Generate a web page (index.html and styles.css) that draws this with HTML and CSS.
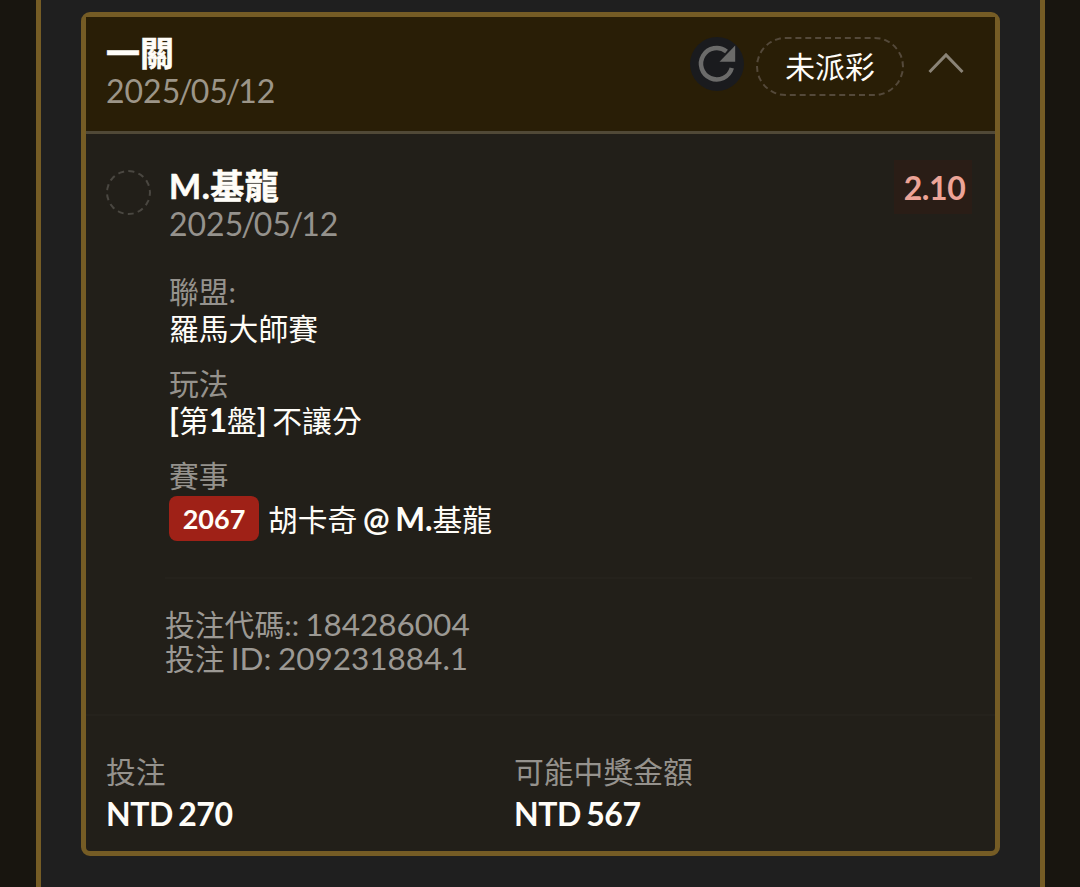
FILE: index.html
```html
<!DOCTYPE html>
<html lang="zh-Hant">

<head>
    <meta charset="UTF-8">
    <meta name="viewport" content="width=device-width, initial-scale=1.0">
    <title>投注紀錄</title>
    <link rel="stylesheet" href="styles.css">
</head>

<body>
    <div class="container">
        <div class="card">
            <div class="card-header">
                <div class="header-text">
                    <div class="title">一關</div>
                    <div class="date">2025<span class="slash">/</span>05<span class="slash">/</span>12</div>
                </div>
                <div class="header-actions">
                    <button class="btn-refresh">
                        <svg width="54" height="54" viewBox="0 0 54 54">
                            <path d="M41.8 31A15.7 15.7 0 1 1 36.5 14.5" fill="none" stroke="#6b6b6a" stroke-width="4.5" />
                            <path d="M45.2 8.5V24.7H29.5Z" fill="#6b6b6a" />
                        </svg>
                    </button>
                    <div class="status">未派彩</div>
                    <svg class="arrow" width="36" height="22" viewBox="0 0 36 22">
                        <path d="M1.5 20L18 3L34.5 20" fill="none" stroke="#8a8376" stroke-width="3" />
                    </svg>
                </div>
            </div>
            <div class="bet">
                <div class="circle"></div>
                <div class="bet-main">
                    <div class="bet-top">
                        <div>
                            <div class="title">M.基龍</div>
                            <div class="date">2025<span class="slash">/</span>05<span class="slash">/</span>12</div>
                        </div>
                        <div class="odds">2.10</div>
                    </div>
                    <div class="info">
                        <div class="label">聯盟:</div>
                        <div class="value">羅馬大師賽</div>
                    </div>
                    <div class="info">
                        <div class="label">玩法</div>
                        <div class="value"><b>[</b>第<b>1</b>盤<b>]</b> 不讓分</div>
                    </div>
                    <div class="info">
                        <div class="label">賽事</div>
                        <div class="value match"><span class="tag">2067</span><span class="teams">胡卡奇 <b>@ M.</b>基龍</span></div>
                    </div>
                    <div class="codes">
                        <div>投注代碼:: <span class="num">184286004</span></div>
                        <div>投注 <span class="num">ID: 209231884.1</span></div>
                    </div>
                </div>
            </div>
            <div class="card-footer">
                <div>
                    <div class="label">投注</div>
                    <div class="money">NTD 270</div>
                </div>
                <div>
                    <div class="label">可能中獎金額</div>
                    <div class="money">NTD 567</div>
                </div>
            </div>
        </div>
    </div>
</body>

</html>
```
FILE: styles.css
```css
* {
    box-sizing: border-box;
}

body {
    margin: 0;
    height: 887px;
    overflow: hidden;
    font-family: Lato, 'Noto Sans CJK TC', sans-serif;
    font-size: 29.8px;
    color: #fffdf8;
    background-color: #18150f;
}

.container {
    width: 1009px;
    height: 887px;
    margin-left: 36px;
    padding: 12px 40px 0;
    border-left: 5px solid #755c25;
    border-right: 5px solid #755c25;
    background-color: #1f1f1f;
}

.card {
    width: 919px;
    height: 844px;
    border: 5px solid #755c25;
    border-radius: 9px;
    background-color: #221f19;
}

.card-header {
    display: flex;
    justify-content: space-between;
    height: 117px;
    padding: 17px 31px 0 20px;
    border-bottom: 3px solid #514937;
    background-color: #291e06;
}

.title {
    font-size: 34px;
    font-weight: 700;
    line-height: 38px;
    -webkit-text-stroke: 0.6px #fffdf8;
}

.bet .title {
    letter-spacing: 0.5px;
}

.date {
    font-size: 32px;
    line-height: 38px;
    color: #9c9588;
}

.bet .date {
    color: #95928d;
}

.slash {
    margin: 0 -2px;
}

.header-actions {
    display: flex;
    align-items: flex-start;
    padding-top: 3px;
}

.btn-refresh {
    width: 54px;
    height: 54px;
    margin: 0 12px 0 0;
    padding: 0;
    border: 0;
    border-radius: 50%;
    background-color: #1a1b1e;
}

.btn-refresh svg {
    display: block;
}

.status {
    width: 148px;
    height: 59px;
    margin-right: 24px;
    border: 2px dashed #54493a;
    border-radius: 30px;
    line-height: 55px;
    text-align: center;
}

.header-actions .btn-refresh {
    margin-left: 1px;
}

.arrow {
    margin-top: 15px;
}

.bet {
    display: flex;
    height: 582px;
    padding: 33px 23px 0 20px;
    border-bottom: 2px solid #25221c;
}

.circle {
    flex: none;
    width: 45px;
    height: 45px;
    margin: 3px 18px 0 0;
    border: 2px dashed #4a4741;
    border-radius: 50%;
}

.bet-main {
    flex: 1;
}

.bet-top {
    display: flex;
    justify-content: space-between;
    height: 106px;
}

.odds {
    width: 78px;
    height: 54px;
    margin-top: -7px;
    padding-left: 3px;
    font-size: 32px;
    font-weight: 700;
    line-height: 56px;
    letter-spacing: -0.4px;
    text-align: center;
    color: #eda497;
    background-color: #2a1d16;
}

.info {
    height: 92px;
}

.label {
    line-height: 37px;
    color: #95928d;
}

.value {
    line-height: 37px;
    word-spacing: -2px;
    white-space: nowrap;
}

.value b {
    font-size: 31.5px;
    font-weight: 700;
}

.match {
    display: flex;
    align-items: center;
    height: 45px;
    margin-top: 2px;
}

.tag {
    width: 90px;
    height: 45px;
    margin-right: 9px;
    border-radius: 8px;
    font-size: 27px;
    font-weight: 700;
    line-height: 45px;
    text-align: center;
    background-color: #9f2117;
}

.teams {
    padding-top: 2px;
}

.codes {
    margin: 28px 0 0 -4px;
    padding-top: 29px;
    border-top: 2px solid #25221c;
    line-height: 34px;
    word-spacing: -1.5px;
    color: #9c9994;
}

.num {
    font-size: 31.5px;
    line-height: 1;
}

.card-footer {
    display: grid;
    grid-template-columns: 408px 1fr;
    padding: 37px 20px 0 20px;
}

.money {
    font-size: 32px;
    font-weight: 700;
    line-height: 48px;
    letter-spacing: -0.45px;
    word-spacing: -2px;
}
```
